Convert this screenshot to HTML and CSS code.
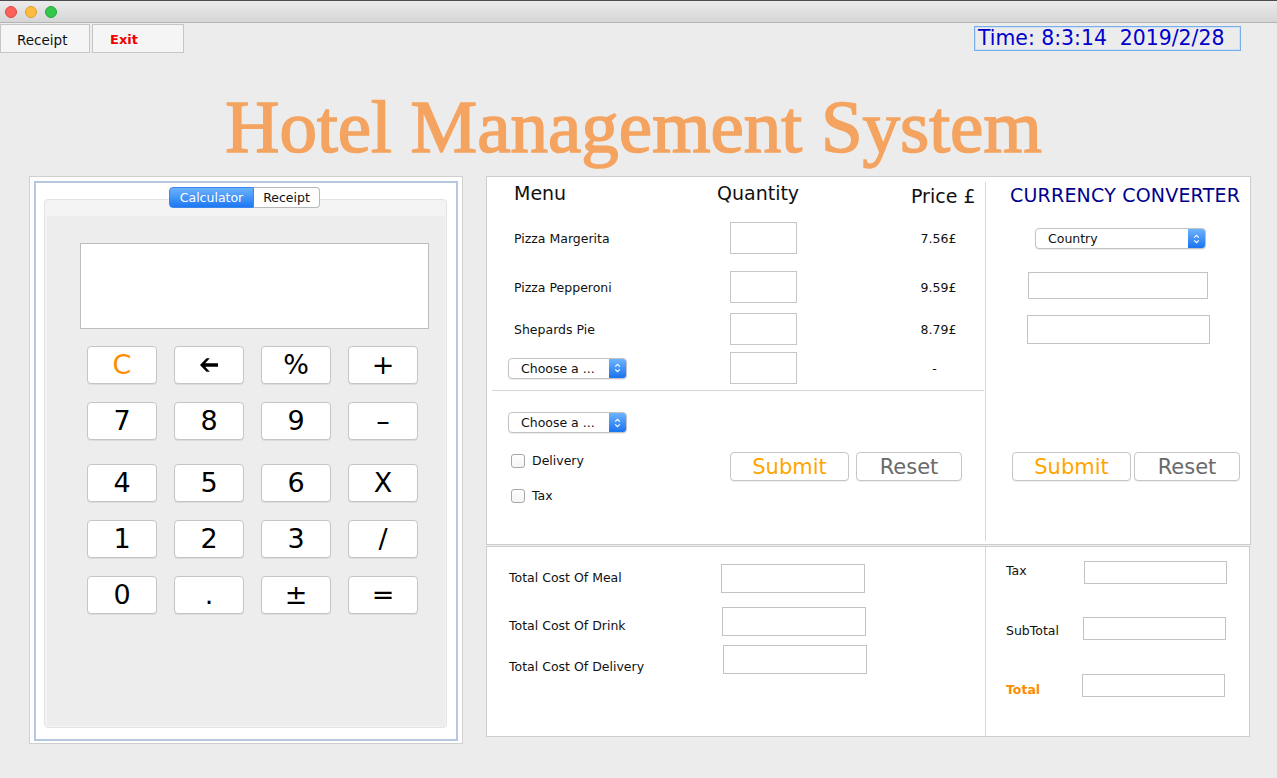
FILE: index.html
```html
<!DOCTYPE html>
<html lang="en">
<head>
<meta charset="utf-8">
<title>Hotel Management System</title>
<link rel="stylesheet" href="styles.css">
</head>
<body>
<div class="titlebar">
  <span class="light red"></span><span class="light yellow"></span><span class="light green"></span>
</div>
<div class="toolbar">
  <button class="tb-btn">Receipt</button>
  <button class="tb-btn exit">Exit</button>
  <div class="clock">Time: 8:3:14  2019/2/28</div>
</div>
<h1 class="title">Hotel Management System</h1>
<div class="main">
  <div class="calc-frame">
    <div class="calc-inner">
      <div class="tabs"><span class="tab active">Calculator</span><span class="tab">Receipt</span></div>
      <div class="pane">
        <div class="pane-body">
          <div class="display"></div>
          <div class="keys">
            <div class="key-row">
              <button class="key clear">C</button>
              <button class="key"><svg class="back" width="18" height="14" viewBox="0 0 18 14"><polygon points="0,7 6.5,0.3 9.8,0.3 5.2,5.2 18,5.2 18,8.8 5.2,8.8 9.8,13.7 6.5,13.7" fill="#000"/></svg></button>
              <button class="key">%</button>
              <button class="key">+</button>
            </div>
            <div class="key-row">
              <button class="key">7</button>
              <button class="key">8</button>
              <button class="key">9</button>
              <button class="key">–</button>
            </div>
            <div class="key-row gap-big">
              <button class="key">4</button>
              <button class="key">5</button>
              <button class="key">6</button>
              <button class="key">X</button>
            </div>
            <div class="key-row">
              <button class="key">1</button>
              <button class="key">2</button>
              <button class="key">3</button>
              <button class="key">/</button>
            </div>
            <div class="key-row">
              <button class="key">0</button>
              <button class="key">.</button>
              <button class="key">±</button>
              <button class="key">=</button>
            </div>
          </div>
        </div>
      </div>
    </div>
  </div>

  <div class="right-col">
    <div class="order-panel">
      <div class="order-left">
        <div class="grid-row header">
          <span class="h-menu">Menu</span>
          <span class="h-qty">Quantity</span>
          <span></span>
          <span class="h-price">Price £</span>
        </div>
        <div class="grid-row item r1">
          <span class="item-label">Pizza Margerita</span>
          <span class="qty"></span>
          <span></span>
          <span class="price">7.56£</span>
        </div>
        <div class="grid-row item r2">
          <span class="item-label">Pizza Pepperoni</span>
          <span class="qty"></span>
          <span></span>
          <span class="price">9.59£</span>
        </div>
        <div class="grid-row item r3">
          <span class="item-label">Shepards Pie</span>
          <span class="qty"></span>
          <span></span>
          <span class="price">8.79£</span>
        </div>
        <div class="grid-row item r4">
          <span class="combo-cell">
            <span class="combo choose"><span class="combo-text">Choose a ...</span><span class="combo-arrow"><svg width="7" height="12" viewBox="0 0 7 12"><path d="M1.2 4.6 L3.5 2.3 L5.8 4.6 M1.2 7.4 L3.5 9.7 L5.8 7.4" fill="none" stroke="#fff" stroke-width="1.2"/></svg></span></span>
          </span>
          <span class="qty"></span>
          <span></span>
          <span class="price dash">-</span>
        </div>
        <div class="separator"></div>
        <div class="combo choose drink"><span class="combo-text">Choose a ...</span><span class="combo-arrow"><svg width="7" height="12" viewBox="0 0 7 12"><path d="M1.2 4.6 L3.5 2.3 L5.8 4.6 M1.2 7.4 L3.5 9.7 L5.8 7.4" fill="none" stroke="#fff" stroke-width="1.2"/></svg></span></div>
        <div class="action-row">
          <div class="checks">
            <label class="check"><span class="box"></span><span>Delivery</span></label>
            <label class="check tax"><span class="box"></span><span>Tax</span></label>
          </div>
          <div class="btns">
            <button class="big-btn submit">Submit</button>
            <button class="big-btn reset">Reset</button>
          </div>
        </div>
      </div>
      <div class="converter">
        <h2 class="conv-title">CURRENCY CONVERTER</h2>
        <div class="combo country"><span class="combo-text">Country</span><span class="combo-arrow"><svg width="7" height="12" viewBox="0 0 7 12"><path d="M1.2 4.6 L3.5 2.3 L5.8 4.6 M1.2 7.4 L3.5 9.7 L5.8 7.4" fill="none" stroke="#fff" stroke-width="1.2"/></svg></span></div>
        <div class="field conv1"></div>
        <div class="field conv2"></div>
        <div class="conv-btns">
          <button class="big-btn submit c-sub">Submit</button>
          <button class="big-btn reset c-res">Reset</button>
        </div>
      </div>
    </div>

    <div class="totals-panel">
      <div class="totals-left">
        <div class="tot-row meal"><span class="tot-label">Total Cost Of Meal</span><span class="field tfield"></span></div>
        <div class="tot-row drink"><span class="tot-label">Total Cost Of Drink</span><span class="field tfield"></span></div>
        <div class="tot-row deliv"><span class="tot-label">Total Cost Of Delivery</span><span class="field tfield"></span></div>
      </div>
      <div class="totals-right">
        <div class="sum-row s-tax"><span class="sum-label">Tax</span><span class="field sfield"></span></div>
        <div class="sum-row s-sub"><span class="sum-label">SubTotal</span><span class="field sfield"></span></div>
        <div class="sum-row s-total"><span class="sum-label total">Total</span><span class="field sfield"></span></div>
      </div>
    </div>
  </div>
</div>
</body>
</html>
```
FILE: styles.css
```css
* { box-sizing: border-box; }
html, body { margin: 0; padding: 0; }
body {
  width: 1277px;
  height: 778px;
  overflow: hidden;
  background: #ececec;
  font-family: "DejaVu Sans", "Noto Sans", sans-serif;
  font-size: 12.5px;
  color: #111;
}
button { font-family: inherit; margin: 0; padding: 0; cursor: default; }

/* title bar */
.titlebar {
  height: 23px;
  border-top: 1px solid #4b4b4b;
  border-bottom: 1px solid #b3b3b3;
  background: linear-gradient(#ebebeb, #d6d6d6);
  display: flex;
  align-items: center;
  padding-left: 5px;
  gap: 8px;
}
.light { width: 12px; height: 12px; border-radius: 50%; display: block; }
.red { background: #fc605b; border: 1px solid #de4a43; }
.yellow { background: #fdbc40; border: 1px solid #de9f34; }
.green { background: #34c84a; border: 1px solid #27aa35; }

/* toolbar */
.toolbar {
  display: flex;
  align-items: flex-start;
  padding-top: 1px;
  height: 30px;
}
.tb-btn {
  height: 29px;
  border: 1px solid #c6c6c6;
  background: #f5f5f5;
  text-align: left;
  padding-left: 16px;
  padding-top: 2px;
  font-size: 13.5px;
  color: #111;
  width: 90px;
}
.tb-btn.exit {
  width: 92px;
  margin-left: 2px;
  padding-left: 17px;
  color: #f00000;
  font-weight: bold;
  font-size: 13px;
}
.clock {
  margin-left: auto;
  margin-right: 36px;
  margin-top: 2px;
  width: 267px;
  height: 25px;
  border: 1px solid #78aee9;
  box-shadow: inset 0 0 0 1px #cde0f6;
  color: #0000cc;
  font-size: 20.4px;
  line-height: 23px;
  padding-left: 3px;
  white-space: pre;
}

/* title */
.title {
  margin: 34px 0 0 0;
  padding-right: 10px;
  font-family: "Liberation Serif", "Times New Roman", serif;
  font-weight: normal;
  font-size: 75px;
  line-height: 80px;
  height: 80px;
  color: #f4a460;
  -webkit-text-stroke: 1.6px #f4a460;
  text-align: center;
}

/* main layout */
.main {
  display: flex;
  align-items: flex-start;
  margin-top: 9px;
  padding-left: 29px;
  gap: 23px;
}

/* calculator */
.calc-frame {
  width: 434px;
  height: 568px;
  border: 1px solid #d0d0d0;
  background: #fdfdfd;
  padding: 4px 4px 2px 4px;
}
.calc-inner {
  height: 560px;
  border: 2px solid #b6c8df;
  background: #ffffff;
  padding-top: 4px;
}
.tabs {
  position: relative;
  z-index: 1;
  width: 403px;
  margin-left: 7px;
  display: flex;
  justify-content: center;
  height: 21px;
}
.tab {
  height: 21px;
  line-height: 19px;
  font-size: 12.5px;
  border: 1px solid #b8b8b8;
  background: #fff;
  color: #111;
  text-align: center;
}
.tab.active {
  width: 85px;
  background: linear-gradient(#6cb2fb, #1c78f3);
  border-color: #3d86ea;
  color: #fff;
  border-radius: 4px 0 0 4px;
}
.tab:not(.active) { width: 66px; border-left: none; border-radius: 0 4px 4px 0; }
.pane {
  width: 403px;
  height: 529px;
  margin: -9px 0 0 8px;
  background: #f4f4f4;
  border: 1px solid #e3e3e3;
  border-radius: 4px;
  padding: 16px 1px 1px 2px;
}
.pane-body {
  height: 100%;
  background: #ededed;
  padding-top: 27px;
}
.display {
  width: 349px;
  height: 86px;
  margin-left: 33px;
  background: #fff;
  border: 1px solid #bdbdbd;
}
.keys {
  margin: 17px 0 0 40px;
  display: flex;
  flex-direction: column;
  gap: 18px;
}
.key-row { display: flex; gap: 17px; }
.key-row.gap-big { margin-top: 6px; }
.key {
  width: 70px;
  height: 38px;
  background: #fff;
  border: 1px solid #c5c5c5;
  border-radius: 4px;
  box-shadow: 0 1px 0 rgba(0,0,0,0.07);
  font-size: 27px;
  line-height: 36px;
  color: #000;
  display: flex;
  align-items: center;
  justify-content: center;
}
.key.clear { color: #ff8c00; }
.back { display: block; }

/* right column */
.right-col { width: 765px; }
.order-panel {
  height: 369px;
  border: 1px solid #cdcdcd;
  background: #fff;
  display: flex;
}
.order-left { width: 498px; }
.grid-row {
  display: grid;
  grid-template-columns: 243px 67px 89px 99px;
  align-items: center;
}
.grid-row.header {
  margin-top: 5px;
  height: 22px;
  align-items: start;
  font-size: 19px;
  line-height: 22px;
}
.h-menu { padding-left: 27px; }
.h-qty { margin-left: -13px; white-space: nowrap; }
.h-price { padding-left: 25px; margin-top: 3px; white-space: nowrap; }
.item { height: 32px; }
.r1 { margin-top: 18px; }
.r2 { margin-top: 17px; }
.r3 { margin-top: 10px; }
.r4 { margin-top: 7px; }
.item-label { padding-left: 27px; }
.qty {
  height: 32px;
  border: 1px solid #c6c6c6;
  background: #fff;
}
.price { text-align: center; padding-left: 6px; }
.price.dash { padding-left: 0; padding-right: 2px; }
.combo-cell { padding-left: 21px; display: flex; }

.combo {
  display: flex;
  height: 21px;
  border: 1px solid #c3c3c3;
  border-radius: 4px;
  background: #fff;
  box-shadow: 0 1px 1px rgba(0,0,0,0.08);
  overflow: hidden;
}
.combo.choose { width: 119px; }
.combo-text { flex: 1; padding-left: 12px; line-height: 19px; font-size: 12.5px; white-space: nowrap; }
.combo-arrow {
  width: 17px;
  background: linear-gradient(#6db3fb, #1a73f1);
  display: flex;
  align-items: center;
  justify-content: center;
}
.separator {
  margin: 6px 1px 0 5px;
  height: 1px;
  background: #d6d6d6;
}
.combo.drink { margin: 21px 0 0 21px; }

.action-row {
  display: grid;
  grid-template-columns: 243px auto;
  margin-top: 19px;
  align-items: start;
}
.checks { padding-left: 24px; padding-top: 2px; display: flex; flex-direction: column; gap: 21px; }
.check { display: flex; align-items: center; gap: 7px; height: 14px; line-height: 14px; }
.box {
  width: 14px;
  height: 14px;
  border: 1px solid #a8a8a8;
  border-radius: 3px;
  background: linear-gradient(#ffffff, #f4f4f4);
}
.btns { display: flex; gap: 7px; }
.big-btn {
  height: 29px;
  background: #fff;
  border: 1px solid #c6c6c6;
  border-radius: 4px;
  box-shadow: 0 1px 0 rgba(0,0,0,0.06);
  font-size: 21px;
  line-height: 27px;
  padding-top: 1px;
}
.submit { width: 119px; color: #ffa500; }
.reset { width: 106px; color: #6a6a6a; }

/* converter */
.converter {
  flex: 1;
  border-left: 1px solid #d8d8d8;
  margin: 5px 0 3px 0;
}
.conv-title {
  margin: 2px 0 0 24px;
  font-size: 19px;
  line-height: 22px;
  font-weight: normal;
  color: #00008b;
  letter-spacing: 0.2px;
  white-space: nowrap;
}
.combo.country { width: 171px; margin: 22px 0 0 49px; }
.field { display: block; background: #fff; border: 1px solid #c3c3c3; }
.conv1 { width: 180px; height: 27px; margin: 23px 0 0 42px; }
.conv2 { width: 183px; height: 29px; margin: 16px 0 0 41px; }
.conv-btns { display: flex; gap: 3px; margin: 108px 0 0 26px; }

/* totals */
.totals-panel {
  width: 764px;
  height: 191px;
  margin-top: 1px;
  border: 1px solid #cdcdcd;
  background: #fff;
  display: flex;
}
.totals-left { width: 498px; padding-top: 17px; }
.tot-row { display: flex; align-items: flex-start; }
.tot-label { width: 234px; padding-left: 22px; line-height: 16px; }
.tfield { width: 144px; height: 29px; }
.meal .tot-label { margin-top: 6px; }
.drink { margin-top: 14px; }
.drink .tot-label { margin-top: 11px; }
.drink .tfield { margin-left: 1px; }
.deliv { margin-top: 9px; }
.deliv .tot-label { margin-top: 14px; }
.deliv .tfield { margin-left: 2px; }

.totals-right { flex: 1; border-left: 1px solid #d8d8d8; }
.sum-row { display: flex; align-items: flex-start; }
.sum-label { padding-left: 20px; line-height: 16px; }
.sfield { width: 143px; height: 23px; }
.s-tax { margin-top: 14px; }
.s-tax .sum-label { width: 98px; margin-top: 2px; }
.s-sub { margin-top: 33px; }
.s-sub .sum-label { width: 97px; margin-top: 6px; }
.s-total { margin-top: 34px; }
.s-total .sum-label { width: 96px; margin-top: 8px; }
.sum-label.total { color: #ff8c00; font-weight: bold; }
```
